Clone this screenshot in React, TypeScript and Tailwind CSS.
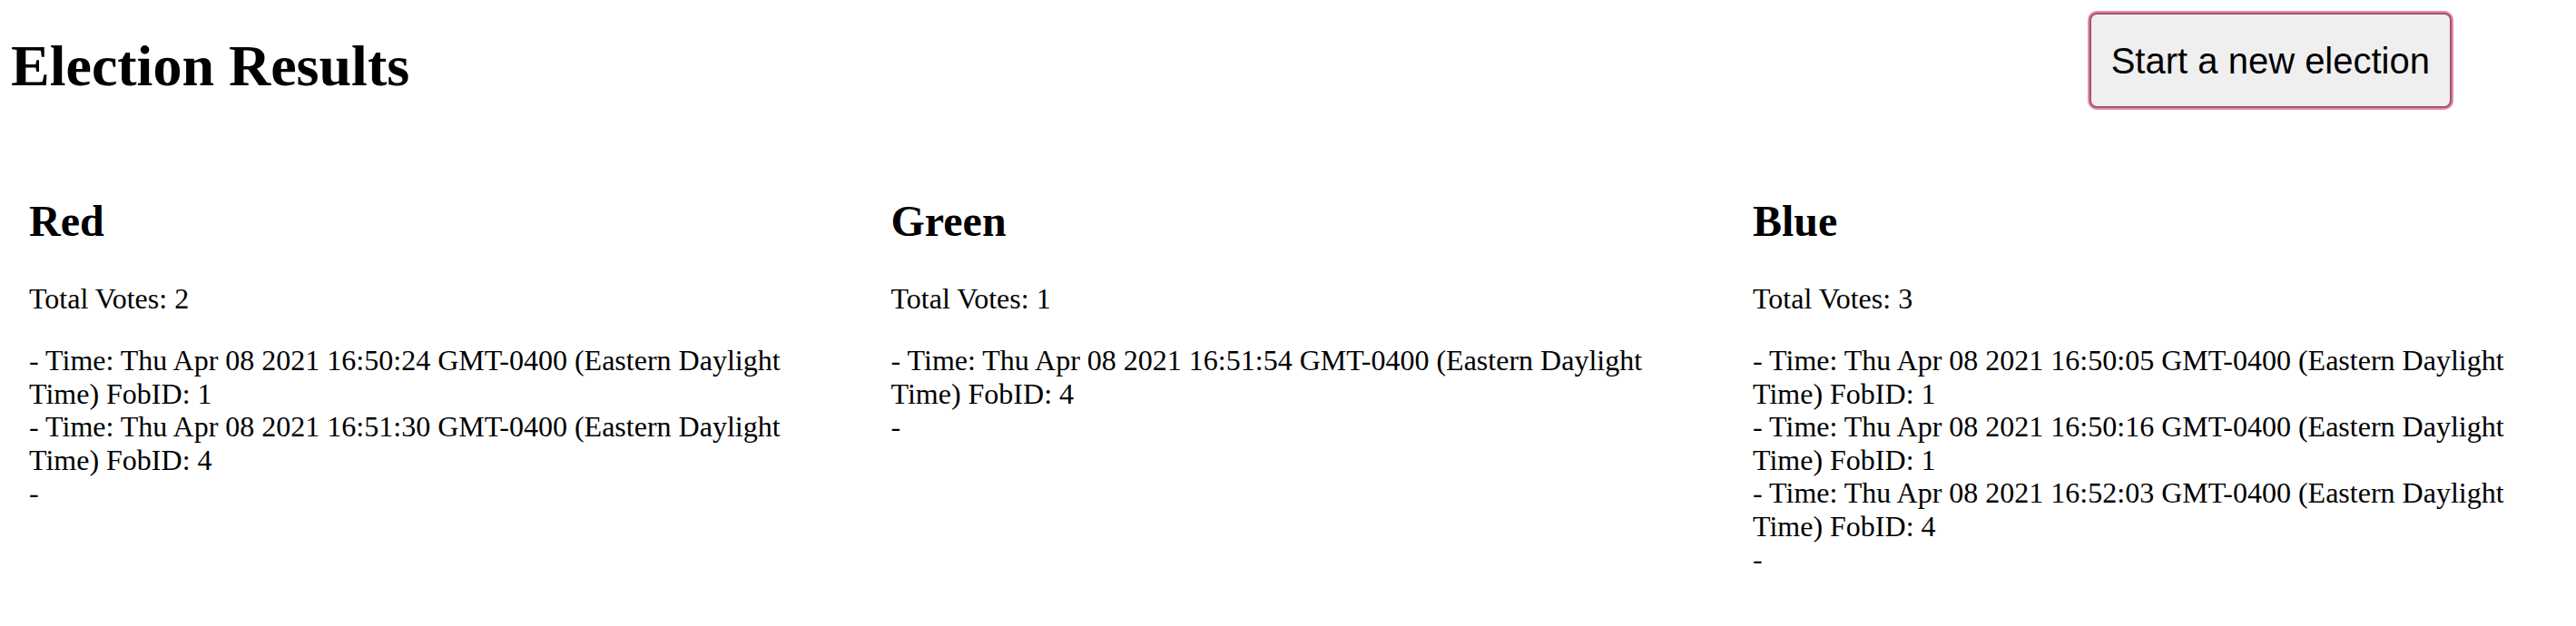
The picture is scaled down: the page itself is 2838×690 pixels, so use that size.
const candidates = [
  {
    name: "Red",
    votes: [
      { time: "Thu Apr 08 2021 16:50:24 GMT-0400 (Eastern Daylight Time)", fob: 1 },
      { time: "Thu Apr 08 2021 16:51:30 GMT-0400 (Eastern Daylight Time)", fob: 4 },
    ],
  },
  {
    name: "Green",
    votes: [{ time: "Thu Apr 08 2021 16:51:54 GMT-0400 (Eastern Daylight Time)", fob: 4 }],
  },
  {
    name: "Blue",
    votes: [
      { time: "Thu Apr 08 2021 16:50:05 GMT-0400 (Eastern Daylight Time)", fob: 1 },
      { time: "Thu Apr 08 2021 16:50:16 GMT-0400 (Eastern Daylight Time)", fob: 1 },
      { time: "Thu Apr 08 2021 16:52:03 GMT-0400 (Eastern Daylight Time)", fob: 4 },
    ],
  },
];

export default function App() {
  return (
    <div className="min-h-[690px] bg-white text-black font-['Liberation_Serif',_'Times_New_Roman',serif] overflow-hidden">
      {/* Header */}
      <div className="flex justify-between items-start pt-[14px] pl-[12px] pr-[137px]">
        <h1 className="mt-[22px] text-[64px] leading-[74px] font-bold">Election Results</h1>
        <button className="h-[105px] px-[22px] flex items-center rounded-[8px] border-2 border-[#a8506e] ring-2 ring-[#e48dac] bg-[#efefef] font-['Liberation_Sans',Arial,sans-serif] text-[40px] leading-[46px] text-black">
          Start a new election
        </button>
      </div>

      {/* Results */}
      <div className="grid grid-cols-[repeat(3,949.5px)] pl-[12px] mt-[57px]">
        {candidates.map((c) => (
          <div key={c.name} className="pl-[20px] pr-[49px] pt-[40px]">
            <h2 className="text-[48px] leading-[55px] font-bold">{c.name}</h2>
            <p className="mt-[40px] text-[32px] leading-[37px]">Total Votes: {c.votes.length}</p>
            <div className="mt-[31px] text-[32px] leading-[36.5px]">
              {c.votes.map((v, i) => (
                <div key={i}>
                  - Time: {v.time} FobID: {v.fob}
                </div>
              ))}
              <div>-</div>
            </div>
          </div>
        ))}
      </div>
    </div>
  );
}
